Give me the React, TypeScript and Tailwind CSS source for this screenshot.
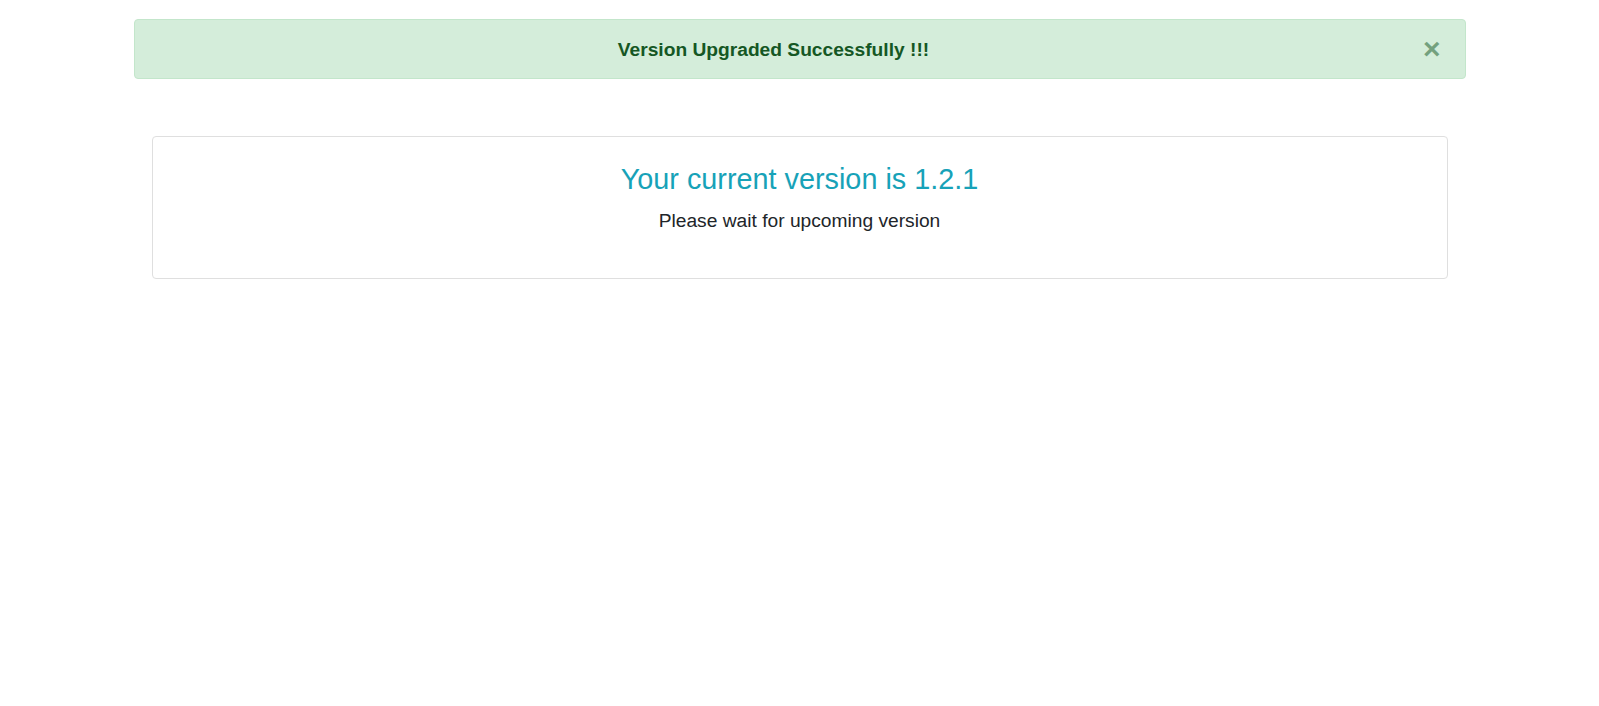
import React from "react";

export default function App() {
  return (
    <div className="min-h-[706px] bg-white pt-[19px]" style={{ fontFamily: '"Liberation Sans", Arial, sans-serif' }}>
      <div className="mx-auto w-[1332px] h-[60px] rounded-[4px] border border-[#c3e6cb] bg-[#d4edda] flex items-center justify-center relative pl-[20px] pr-[72px]">
        <span className="mt-[2px] text-[19.2px] font-bold text-[#155724] leading-none">Version Upgraded Successfully !!!</span>
        <button className="absolute right-[24px] top-1/2 -translate-y-1/2 text-[30px] font-bold leading-none text-[#155724] opacity-50">×</button>
      </div>
      <div className="mx-auto mt-[57px] w-[1296px] h-[143px] rounded-[4px] border border-[#dfdfdf] flex flex-col items-center pt-[25px]">
        <h3 className="text-[28.8px] leading-[1.2] text-[#17a2b8]">Your current version is 1.2.1</h3>
        <p className="mt-[10px] text-[19.2px] leading-[1.5] text-[#212529]">Please wait for upcoming version</p>
      </div>
    </div>
  );
}
